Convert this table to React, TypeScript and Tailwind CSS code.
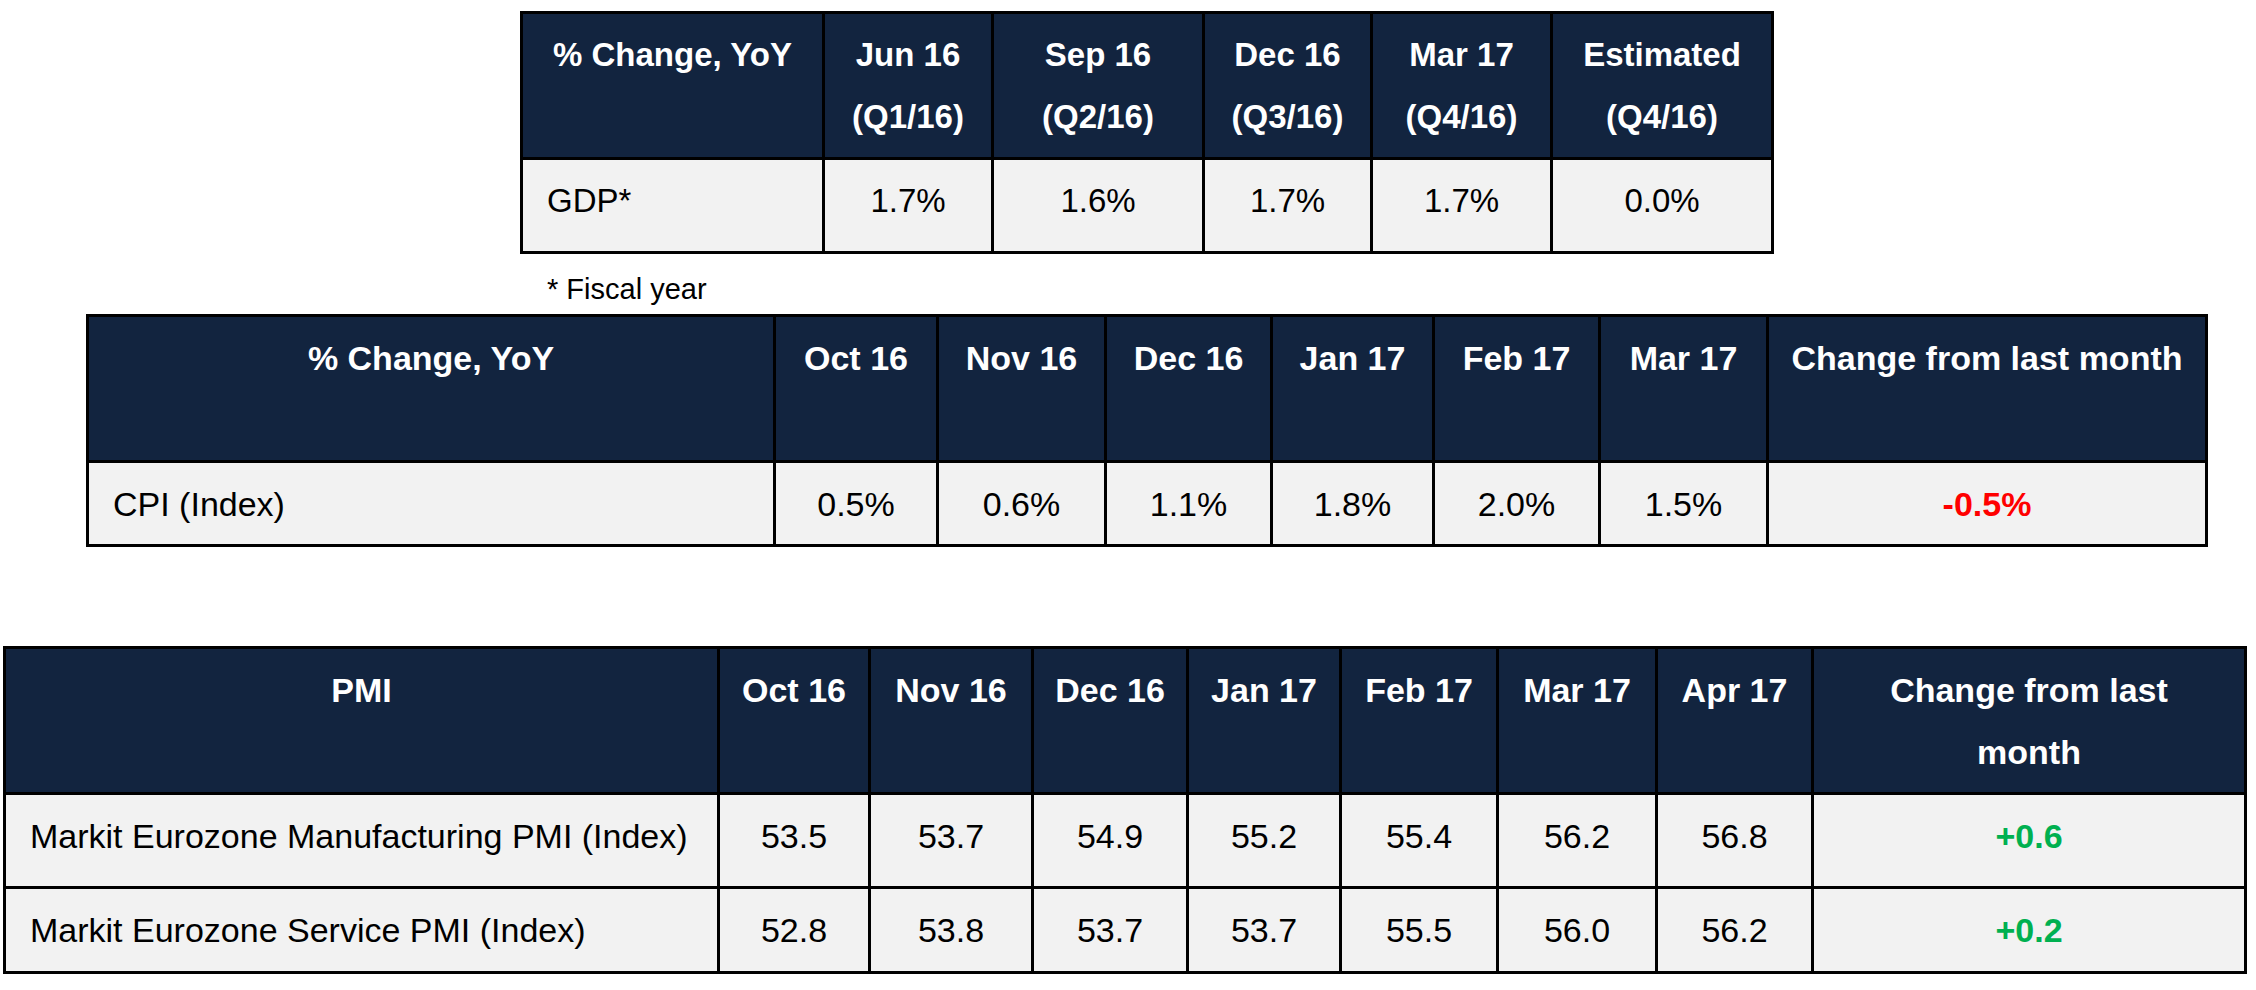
type Cell = { text: string; color?: string };

const NAVY = 'bg-[#12243f]';

function Row({
  cells,
  widths,
  height,
  header,
  firstLeft,
}: {
  cells: Cell[];
  widths: number[];
  height: number;
  header?: boolean;
  firstLeft?: boolean;
}) {
  return (
    <div className="flex" style={{ height }}>
      {cells.map((c, i) => {
        let tone = 'bg-[#f2f2f2] text-black text-center ';
        if (header) tone = `${NAVY} text-white font-bold text-center px-2 `;
        else if (c.color === 'red') tone = 'bg-[#f2f2f2] text-[#ff0000] font-bold text-center ';
        else if (c.color === 'green') tone = 'bg-[#f2f2f2] text-[#00b050] font-bold text-center ';
        else if (i === 0 && firstLeft) tone = 'bg-[#f2f2f2] text-black text-left pl-[24px] ';
        return (
          <div
            key={i}
            style={{ width: widths[i] }}
            className={'shrink-0 border-r-[3px] border-b-[3px] border-black pt-[10px] leading-[62px] ' + tone}
          >
            {c.text.split('\n').map((l, j) => (
              <div key={j}>{l}</div>
            ))}
          </div>
        );
      })}
    </div>
  );
}

function Table({
  widths,
  head,
  headHeight,
  rows,
}: {
  widths: number[];
  head: string[];
  headHeight: number;
  rows: { cells: Cell[]; height: number }[];
}) {
  return (
    <div className="inline-flex flex-col border-l-[3px] border-t-[3px] border-black">
      <Row header widths={widths} height={headHeight} cells={head.map((t) => ({ text: t }))} />
      {rows.map((r, i) => (
        <Row key={i} widths={widths} height={r.height} cells={r.cells} firstLeft />
      ))}
    </div>
  );
}

const v = (arr: string[]): Cell[] => arr.map((t) => ({ text: t }));

export default function App() {
  return (
    <div
      className="w-[2256px] h-[990px] bg-white text-[33px] overflow-hidden"
      style={{ fontFamily: '"Liberation Sans", Arial, sans-serif' }}
    >
      {/* GDP */}
      <div className="pt-[11px] pl-[520px]">
        <Table
          widths={[302, 169, 211, 168, 180, 221]}
          head={['% Change, YoY', 'Jun 16\n(Q1/16)', 'Sep 16\n(Q2/16)', 'Dec 16\n(Q3/16)', 'Mar 17\n(Q4/16)', 'Estimated\n(Q4/16)']}
          headHeight={146}
          rows={[{ height: 94, cells: v(['GDP*', '1.7%', '1.6%', '1.7%', '1.7%', '0.0%']) }]}
        />
        <p className="text-[29px] leading-[34px] pl-[27px] mt-[18px]">* Fiscal year</p>
      </div>

      {/* CPI */}
      <div className="pl-[86px] mt-[8px] text-[34px]">
        <Table
          widths={[687, 163, 168, 166, 162, 166, 168, 439]}
          head={['% Change, YoY', 'Oct 16', 'Nov 16', 'Dec 16', 'Jan 17', 'Feb 17', 'Mar 17', 'Change from last month']}
          headHeight={146}
          rows={[
            {
              height: 84,
              cells: [...v(['CPI (Index)', '0.5%', '0.6%', '1.1%', '1.8%', '2.0%', '1.5%']), { text: '-0.5%', color: 'red' }],
            },
          ]}
        />
      </div>

      {/* PMI */}
      <div className="pl-[3px] mt-[99px] text-[34px]">
        <Table
          widths={[714, 151, 163, 155, 153, 157, 159, 156, 433]}
          head={['PMI', 'Oct 16', 'Nov 16', 'Dec 16', 'Jan 17', 'Feb 17', 'Mar 17', 'Apr 17', 'Change from last\nmonth']}
          headHeight={146}
          rows={[
            {
              height: 94,
              cells: [
                ...v(['Markit Eurozone Manufacturing PMI (Index)', '53.5', '53.7', '54.9', '55.2', '55.4', '56.2', '56.8']),
                { text: '+0.6', color: 'green' },
              ],
            },
            {
              height: 85,
              cells: [
                ...v(['Markit Eurozone Service PMI (Index)', '52.8', '53.8', '53.7', '53.7', '55.5', '56.0', '56.2']),
                { text: '+0.2', color: 'green' },
              ],
            },
          ]}
        />
      </div>
    </div>
  );
}
